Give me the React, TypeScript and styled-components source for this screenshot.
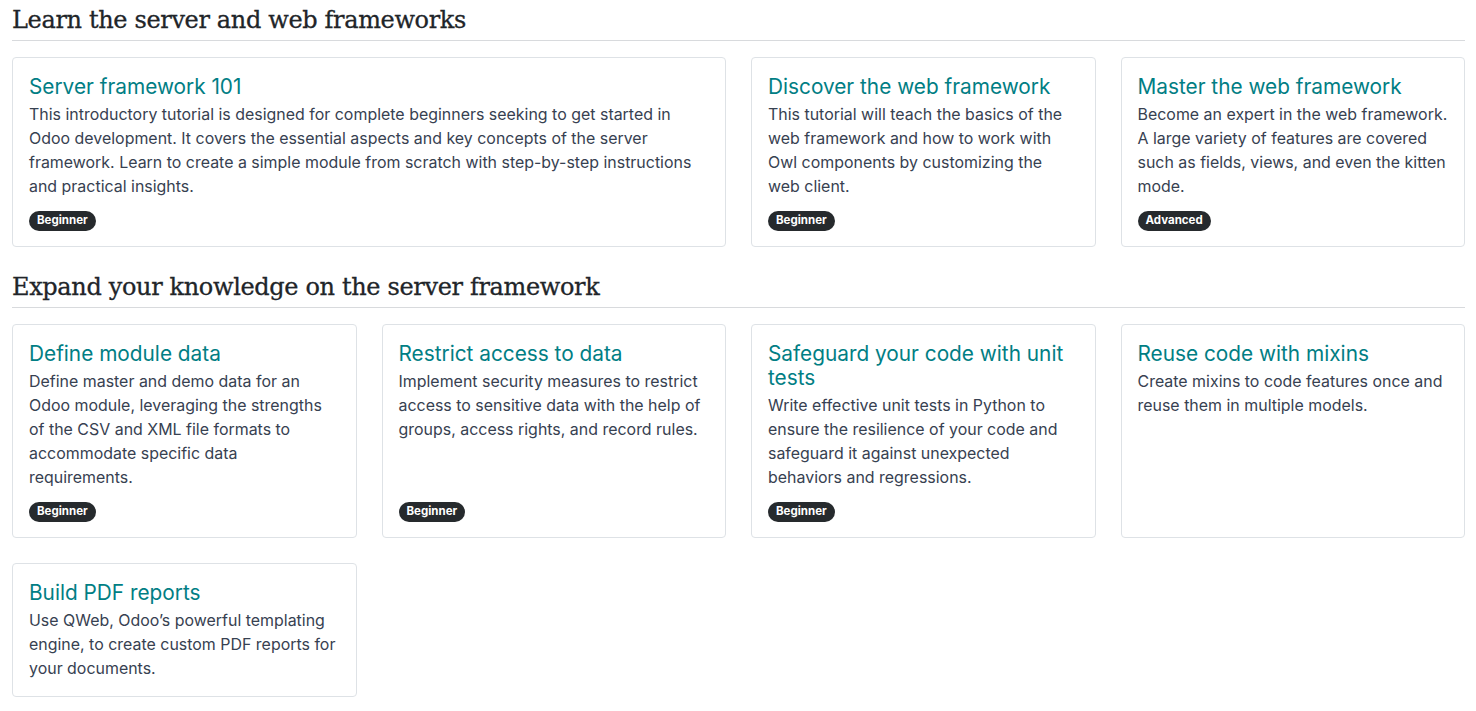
import React from 'react';
import styled, { createGlobalStyle } from 'styled-components';

type Level = 'Beginner' | 'Advanced';

interface Tutorial {
  title: string;
  text: string;
  level?: Level;
  wide?: boolean;
}

const sections: { heading: string; items: Tutorial[] }[] = [
  {
    heading: 'Learn the server and web frameworks',
    items: [
      {
        title: 'Server framework 101',
        text:
          'This introductory tutorial is designed for complete beginners seeking to get started in Odoo development. It covers the essential aspects and key concepts of the server framework. Learn to create a simple module from scratch with step-by-step instructions and practical insights.',
        level: 'Beginner',
        wide: true,
      },
      {
        title: 'Discover the web framework',
        // keep "web client." together so it wraps as one piece
        text:
          'This tutorial will teach the basics of the web framework and how to work with Owl components by customizing the web\u00a0client.',
        level: 'Beginner',
      },
      {
        title: 'Master the web framework',
        text:
          'Become an expert in the web framework. A large variety of features are covered such as fields, views, and even the kitten mode.',
        level: 'Advanced',
      },
    ],
  },
  {
    heading: 'Expand your knowledge on the server framework',
    items: [
      {
        title: 'Define module data',
        text:
          'Define master and demo data for an Odoo module, leveraging the strengths of the CSV and XML file formats to accommodate specific data requirements.',
        level: 'Beginner',
      },
      {
        title: 'Restrict access to data',
        text:
          'Implement security measures to restrict access to sensitive data with the help of groups, access rights, and record rules.',
        level: 'Beginner',
      },
      {
        title: 'Safeguard your code with unit tests',
        text:
          'Write effective unit tests in Python to ensure the resilience of your code and safeguard it against unexpected behaviors and regressions.',
        level: 'Beginner',
      },
      {
        title: 'Reuse code with mixins',
        text: 'Create mixins to code features once and reuse them in multiple models.',
      },
      {
        title: 'Build PDF reports',
        text:
          'Use QWeb, Odoo\u2019s powerful templating engine, to create custom PDF reports for your documents.',
      },
    ],
  },
];

const GlobalStyle = createGlobalStyle`
  body {
    margin: 0;
    background: #ffffff;
    font-family: Inter, "Noto Sans", sans-serif;
    color: #374151;
  }
`;

const Page = styled.main`
  padding: 0 11px 0 12px;
`;

const Section = styled.section`
  & + & {
    margin-top: 20px;
  }
`;

const Heading = styled.h2`
  margin: 0 0 16px;
  padding: 4px 0 4px;
  font-family: "DejaVu Serif", "Liberation Serif", serif;
  font-weight: 400;
  font-size: 24px;
  letter-spacing: -0.35px;
  line-height: 32px;
  color: #212529;
  -webkit-text-stroke: 0.3px #212529;
  border-bottom: 1px solid #d8dadd;
`;

const Grid = styled.div`
  display: grid;
  grid-template-columns: repeat(4, minmax(0, 1fr));
  gap: 25px;
`;

const Card = styled.article<{ $wide?: boolean }>`
  grid-column: span ${(p) => (p.$wide ? 2 : 1)};
  display: flex;
  flex-direction: column;
  align-items: flex-start;
  padding: 17px 16px 15px;
  border: 1px solid #dee2e6;
  border-radius: 4px;
  background: #ffffff;
`;

const Title = styled.h3`
  margin: 0 0 4px;
  font-family: Inter, "Noto Sans", sans-serif;
  font-weight: 400;
  font-size: 20.8px;
  line-height: 24px;
  color: #017e84;
`;

const Text = styled.p`
  margin: 0;
  font-size: 15.95px;
  line-height: 24px;
  color: #374151;
`;

const BadgeRow = styled.div`
  display: flex;
  margin-top: auto;
  padding-top: 12px;
`;

const Badge = styled.span`
  display: inline-flex;
  align-items: center;
  height: 20px;
  padding: 0 8px;
  border-radius: 10px;
  background: #262a2d;
  color: #ffffff;
  font-size: 11.5px;
  font-weight: 700;
  line-height: 1;
`;

export default function App() {
  return (
    <Page>
      <GlobalStyle />
      {sections.map((s) => (
        <Section key={s.heading}>
          <Heading>{s.heading}</Heading>
          <Grid>
            {s.items.map((t) => (
              <Card key={t.title} $wide={t.wide}>
                <Title>{t.title}</Title>
                <Text>{t.text}</Text>
                {t.level && (
                  <BadgeRow>
                    <Badge>{t.level}</Badge>
                  </BadgeRow>
                )}
              </Card>
            ))}
          </Grid>
        </Section>
      ))}
    </Page>
  );
}
